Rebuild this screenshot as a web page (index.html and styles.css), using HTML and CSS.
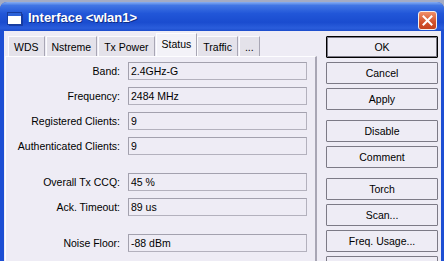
FILE: index.html
```html
<!DOCTYPE html>
<html lang="en">
<head>
    <meta charset="UTF-8"/>
    <title>Interface &lt;wlan1&gt;</title>
    <link rel="stylesheet" href="styles.css">
</head>
<body>
<div class="window">
    <div class="titlebar">
        <svg class="app-icon" width="16" height="14" viewBox="0 0 16 14">
            <rect x="0.5" y="0.5" width="14" height="12" fill="#fff" stroke="#173d9e"/>
            <rect x="1" y="1" width="13" height="3" fill="#2c62d8"/>
            <path d="M15.5 2 V13.5 H2" fill="none" stroke="#0f2d86" stroke-opacity=".6"/>
        </svg>
        <span class="title">Interface &lt;wlan1&gt;</span>
        <span class="close">
            <svg width="11" height="11" viewBox="0 0 11 11"><path d="M1.5 1.5 L9.5 9.5 M9.5 1.5 L1.5 9.5" stroke="#fff" stroke-width="2" stroke-linecap="square"/></svg>
        </span>
    </div>

    <div class="client">
        <div class="main">
            <div class="tabs">
                <div class="tab">WDS</div>
                <div class="tab">Nstreme</div>
                <div class="tab">Tx Power</div>
                <div class="tab active">Status</div>
                <div class="tab">Traffic</div>
                <div class="tab">...</div>
            </div>

            <div class="panel">
                <div class="group">
                    <div class="row"><label>Band:</label><div class="field">2.4GHz-G</div></div>
                    <div class="row"><label>Frequency:</label><div class="field">2484 MHz</div></div>
                    <div class="row"><label>Registered Clients:</label><div class="field">9</div></div>
                    <div class="row"><label>Authenticated Clients:</label><div class="field">9</div></div>
                </div>
                <div class="group">
                    <div class="row"><label>Overall Tx CCQ:</label><div class="field">45 %</div></div>
                    <div class="row"><label>Ack. Timeout:</label><div class="field">89 us</div></div>
                </div>
                <div class="group">
                    <div class="row"><label>Noise Floor:</label><div class="field">-88 dBm</div></div>
                </div>
            </div>
        </div>

        <div class="buttons">
            <div class="btn-group">
                <button class="default">OK</button>
                <button>Cancel</button>
                <button>Apply</button>
            </div>
            <div class="btn-group">
                <button>Disable</button>
                <button>Comment</button>
            </div>
            <div class="btn-group">
                <button>Torch</button>
                <button>Scan...</button>
                <button>Freq. Usage...</button>
                <button aria-label="more"></button>
            </div>
        </div>
    </div>
</div>
</body>
</html>
```

FILE: styles.css
```css
* {
    margin: 0;
    padding: 0;
    box-sizing: border-box
}

body {
    width: 444px;
    height: 261px;
    overflow: hidden;
    background: #a3abc4;
    font-family: 'Liberation Sans', Arial, sans-serif;
    font-size: 10.5px;
    color: #000
}

.window {
    margin-top: 2px;
    height: 259px;
    border-radius: 7px 7px 0 0;
    background: #1d4fd4;
    overflow: hidden;
    display: flex;
    flex-direction: column
}

.titlebar {
    height: 29px;
    flex: none;
    display: flex;
    align-items: center;
    padding: 0 6px 0 7px;
    background: linear-gradient(180deg, #86aef2 0%, #4075e4 12%, #2156d8 40%, #1a4ccf 70%, #2a5ddb 90%, #1c4ccc 100%)
}

.app-icon {
    flex: none;
    display: block;
    margin-top: 4px
}

.title {
    margin-left: 5px;
    margin-top: 2px;
    color: #fff;
    font-size: 13px;
    font-weight: bold;
    text-shadow: 1px 1px 0 #0f2d86;
    flex: 1
}

.close {
    width: 19px;
    height: 19px;
    margin-top: 7px;
    margin-right: 1px;
    border: 1px solid #f4f0ee;
    border-radius: 3px;
    background: linear-gradient(180deg, #f0906a, #d2522c 60%, #c4431f);
    display: flex;
    align-items: center;
    justify-content: center
}

.client {
    flex: 1;
    display: flex;
    margin: 0 3px 0 4px;
    padding-top: 2px;
    background: #eeecf5
}

.main {
    width: 312px;
    margin-left: 1px;
    display: flex;
    flex-direction: column
}

.tabs {
    display: flex;
    align-items: flex-end;
    padding-left: 3px;
    height: 23px
}

.tab {
    height: 20px;
    padding: 0 5px;
    line-height: 20px;
    background: #e4e2ea;
    border: 1px solid #fbfbfd;
    border-right-color: #a8a6b4;
    border-bottom: none;
    margin-right: 1px;
    white-space: nowrap
}

.tab.active {
    height: 23px;
    line-height: 21px;
    background: #f3f2f8;
    border-color: #fdfdff #a8a6b4 transparent #fdfdff;
    margin-right: 0
}

.panel {
    flex: 1;
    border-top: 1px solid #fdfdff;
    border-left: 1px solid #fdfdff;
    border-right: 2px solid #a8a6b4;
    padding-top: 5px;
    display: flex;
    flex-direction: column;
    gap: 18px
}

.group {
    display: flex;
    flex-direction: column;
    gap: 7px
}

.row {
    display: flex;
    align-items: center;
    height: 18px
}

.row label {
    width: 114px;
    text-align: right;
    white-space: nowrap
}

.field {
    margin-left: 8px;
    width: 179px;
    height: 18px;
    line-height: 16px;
    padding-left: 2px;
    border: 1px solid #a3a1ae;
    border-right-color: #b3b1bd;
    border-bottom-color: #b3b1bd
}

.buttons {
    width: 112px;
    margin-left: 9px;
    padding-top: 3px;
    display: flex;
    flex-direction: column;
    gap: 10px
}

.btn-group {
    display: flex;
    flex-direction: column;
    gap: 4px
}

button {
    height: 22px;
    flex: none;
    font-family: inherit;
    font-size: 10.5px;
    color: #000;
    background: #eeecf5;
    border: 1px solid #7c7a86;
    border-radius: 1px
}

button.default {
    border-color: #000;
    box-shadow: inset 0 0 0 1px #7c7a86
}
```
